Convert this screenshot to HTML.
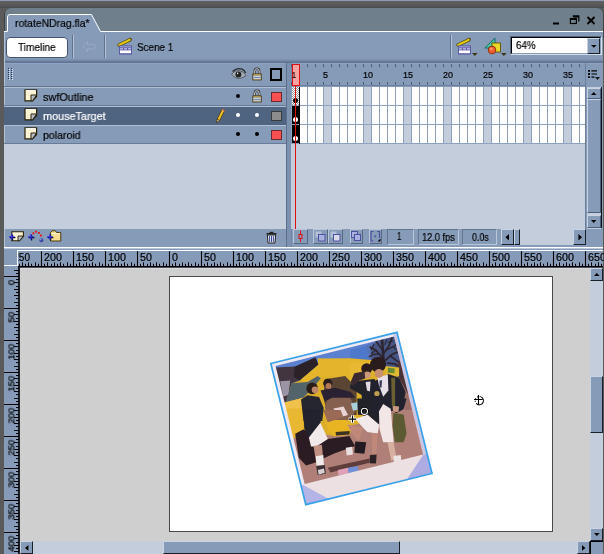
<!DOCTYPE html>
<html><head><meta charset="utf-8"><title>rotateNDrag.fla</title>
<style>
*{box-sizing:border-box;margin:0;padding:0}
html,body{width:604px;height:554px;overflow:hidden;background:#5a5a5a}
body{position:relative;font-family:"Liberation Sans","DejaVu Sans",sans-serif;font-size:11px;color:#000}
.a{position:absolute}
.t{position:absolute;white-space:nowrap;line-height:1;transform-origin:0 0;-webkit-text-stroke:.2px currentColor;will-change:transform}
.btn{position:absolute;background:#869bb8;border:1px solid;border-color:#c9d3e2 #1a1f28 #1a1f28 #c9d3e2}
svg{position:absolute;overflow:visible}
</style></head><body>

<div class="a" style="left:0;top:0;width:604px;height:1px;background:#8d9cb4"></div>
<div class="a" style="left:0;top:1px;width:604px;height:7px;background:linear-gradient(#606060,#585858 60%,#4c4c4c)"></div>
<div class="a" style="left:3.5px;top:7.5px;width:600px;height:30px;background:#3c4044;border-radius:7px 7px 0 0"></div>
<div class="a" style="left:4.5px;top:8.3px;width:598.5px;height:30px;background:#6f808c;border-radius:6px 6px 0 0"></div>
<div class="a" style="left:4px;top:32px;width:599px;height:215px;background:#869bb8"></div>
<svg style="left:0;top:0" width="604" height="40">
<path d="M7.5 32 V17 Q7.5 14.5 10 14.5 H91.5 L100.5 31.5 H603 V33 H7.5Z" fill="#869bb8"/>
<path d="M4 31.5 H7.5 V17 Q7.5 14.5 10 14.5 H91.5 L100.5 31.5 H603" fill="none" stroke="#fff" stroke-width="1"/>
</svg>
<div class="t" style="left:15px;top:18px;transform:scaleX(.945)">rotateNDrag.fla*</div>
<svg style="left:0;top:0" width="604" height="32">
<rect x="553" y="22.5" width="6" height="2" fill="#000"/>
<path d="M572.8 15.8 H578.8 V21.4 M572.8 16.8 H578.8" fill="none" stroke="#000" stroke-width="1.2"/>
<rect x="570.4" y="18.5" width="6" height="5" fill="none" stroke="#000" stroke-width="1.2"/>
<path d="M570.4 19.4 H576.4" stroke="#000" stroke-width="1.2"/>
<path d="M587.5 17 L594.5 24 M594.5 17 L587.5 24" stroke="#000" stroke-width="2"/>
</svg>
<div class="a" style="left:6px;top:37px;width:62px;height:21px;background:#fff;border:1px solid #465670;border-radius:4px"></div>
<div class="t" style="left:18.2px;top:42px;transform:scaleX(.915)">Timeline</div>
<div class="a" style="left:72px;top:35px;width:1px;height:24px;background:#60738f"></div>
<div class="a" style="left:73px;top:35px;width:1px;height:24px;background:#b4c1d5"></div>
<div class="a" style="left:104px;top:35px;width:1px;height:24px;background:#60738f"></div>
<div class="a" style="left:105px;top:35px;width:1px;height:24px;background:#b4c1d5"></div>
<div class="a" style="left:450px;top:35px;width:1px;height:24px;background:#60738f"></div>
<div class="a" style="left:451px;top:35px;width:1px;height:24px;background:#b4c1d5"></div>
<div class="t" style="left:137px;top:42px;transform:scaleX(.9)">Scene 1</div>
<svg style="left:118px;top:37.8px" width="16" height="18">
<path d="M1 7 L12.2 1.6" stroke="#4a4010" stroke-width="3.4" stroke-linecap="round"/>
<path d="M1.2 6.9 L12 1.7" stroke="#e0c814" stroke-width="2.2" stroke-linecap="round" stroke-dasharray="1.7 .8"/>
<rect x="1" y="7.4" width="13" height="9.2" fill="#5c5ca6"/>
<rect x="2" y="8.4" width="11" height=".9" fill="#b4b4e0"/>
<path d="M2 10.9 H5 M6 10.9 H9 M10 10.9 H13" stroke="#c8c8ee" stroke-width="1.1"/>
<rect x="2" y="12.4" width="11" height="2.8" fill="#fff"/>
</svg>
<svg style="left:457px;top:37.8px" width="16" height="18">
<path d="M1 7 L12.2 1.6" stroke="#4a4010" stroke-width="3.4" stroke-linecap="round"/>
<path d="M1.2 6.9 L12 1.7" stroke="#e0c814" stroke-width="2.2" stroke-linecap="round" stroke-dasharray="1.7 .8"/>
<rect x="1" y="7.4" width="13" height="9.2" fill="#5c5ca6"/>
<rect x="2" y="8.4" width="11" height=".9" fill="#b4b4e0"/>
<path d="M2 10.9 H5 M6 10.9 H9 M10 10.9 H13" stroke="#c8c8ee" stroke-width="1.1"/>
<rect x="2" y="12.4" width="11" height="2.8" fill="#fff"/>
</svg>
<svg style="left:82px;top:41px" width="14" height="13">
<path d="M0.5 5.5 L5.5 0.5 V3.5 H13 V8 H8 V7.5 H5.5 V10.5 Z" fill="none" stroke="#a9b4cd" stroke-width="1" stroke-dasharray="1 1"/>
</svg>
<svg style="left:472px;top:53px" width="6" height="4"><path d="M0 0 H5.6 L2.8 3 Z" fill="#3c3418"/></svg>
<svg style="left:501px;top:53px" width="6" height="4"><path d="M0 0 H5.6 L2.8 3 Z" fill="#3c3418"/></svg>
<svg style="left:484px;top:37px" width="18" height="18">
<path d="M0.8 11 L11 1 V11 Z" fill="#40c8a0" stroke="#1a6a70" stroke-width="1"/>
<rect x="8" y="6" width="8.5" height="9" fill="#e8d828" stroke="#6a5a10" stroke-width="1"/>
<circle cx="8" cy="13" r="3.8" fill="#f06030" stroke="#903010" stroke-width="1"/>
<circle cx="7.3" cy="11.8" r="1.3" fill="#f8a070"/>
</svg>
<div class="a" style="left:510px;top:36px;width:92px;height:19px;background:#fff;border:1px solid;border-color:#55657d #d5dde9 #d5dde9 #55657d"></div>
<div class="a" style="left:511px;top:37px;width:90px;height:17px;border:1px solid;border-color:#000 #869bb8 #869bb8 #000"></div>
<div class="btn" style="left:587px;top:38px;width:13px;height:15.5px"></div>
<svg style="left:590.8px;top:44.6px" width="6" height="4"><path d="M0 0 H5.6 L2.8 2.8 Z" fill="#000"/></svg>
<div class="t" style="left:515.5px;top:41.3px;font-size:10.3px;transform:scaleX(.95)">64%</div>
<div class="a" style="left:4px;top:58px;width:599px;height:5px;background:linear-gradient(#869bb8,#7f95b2 30%,#6c82a0 60%,#5a708e)"></div>
<div class="a" style="left:4px;top:63px;width:599px;height:1px;background:#90a4c0"></div>
<div class="a" style="left:4px;top:32px;width:1px;height:215px;background:#b4c1d5"></div>
<svg style="left:8px;top:68px" width="6" height="14"><rect x="0" y="0" width="1" height="1" fill="#2c3a52"/><rect x="1" y="1" width="1" height="1" fill="#d4eaff"/><rect x="3" y="0" width="1" height="1" fill="#2c3a52"/><rect x="4" y="1" width="1" height="1" fill="#d4eaff"/><rect x="0" y="2" width="1" height="1" fill="#2c3a52"/><rect x="1" y="3" width="1" height="1" fill="#d4eaff"/><rect x="3" y="2" width="1" height="1" fill="#2c3a52"/><rect x="4" y="3" width="1" height="1" fill="#d4eaff"/><rect x="0" y="4" width="1" height="1" fill="#2c3a52"/><rect x="1" y="5" width="1" height="1" fill="#d4eaff"/><rect x="3" y="4" width="1" height="1" fill="#2c3a52"/><rect x="4" y="5" width="1" height="1" fill="#d4eaff"/><rect x="0" y="6" width="1" height="1" fill="#2c3a52"/><rect x="1" y="7" width="1" height="1" fill="#d4eaff"/><rect x="3" y="6" width="1" height="1" fill="#2c3a52"/><rect x="4" y="7" width="1" height="1" fill="#d4eaff"/><rect x="0" y="8" width="1" height="1" fill="#2c3a52"/><rect x="1" y="9" width="1" height="1" fill="#d4eaff"/><rect x="3" y="8" width="1" height="1" fill="#2c3a52"/><rect x="4" y="9" width="1" height="1" fill="#d4eaff"/><rect x="0" y="10" width="1" height="1" fill="#2c3a52"/><rect x="1" y="11" width="1" height="1" fill="#d4eaff"/><rect x="3" y="10" width="1" height="1" fill="#2c3a52"/><rect x="4" y="11" width="1" height="1" fill="#d4eaff"/></svg>
<div class="a" style="left:4px;top:86px;width:282px;height:1px;background:#5f7490"></div>
<div class="a" style="left:4px;top:87px;width:282px;height:1px;background:#b0bfd4"></div>
<div class="a" style="left:4px;top:105px;width:282px;height:1px;background:#677c99"></div>
<div class="t" style="left:42.7px;top:92px;color:#000;transform:scaleX(0.985)">swfOutline</div>
<svg style="left:24px;top:89px" width="14" height="13">
<path d="M1 0.8 H12.6 V7.5 L8.5 11.8 H1 Z" fill="#fbf4d4" stroke="#2a2208" stroke-width="1.2"/>
<path d="M7 6 H12.6 L8.5 11.8 H7 Z" fill="#b8bcc8" stroke="#2a2208" stroke-width="1"/>
<path d="M1.8 1.6 H11.8" stroke="#fff" stroke-width="1"/>
</svg>
<div class="a" style="left:236px;top:94px;width:4px;height:4px;border-radius:2px;background:#000"></div>
<div class="a" style="left:270.5px;top:91.5px;width:11.5px;height:10.5px;background:#f85050;border:1px solid #6a2a30"></div>
<div class="a" style="left:4px;top:107px;width:282px;height:18px;background:#4f6480"></div>
<div class="a" style="left:4px;top:106px;width:282px;height:1px;background:#b0bfd4"></div>
<div class="t" style="left:42.7px;top:111px;color:#fff;transform:scaleX(0.985)">mouseTarget</div>
<svg style="left:24px;top:108px" width="14" height="13">
<path d="M1 0.8 H12.6 V7.5 L8.5 11.8 H1 Z" fill="#fbf4d4" stroke="#2a2208" stroke-width="1.2"/>
<path d="M7 6 H12.6 L8.5 11.8 H7 Z" fill="#b8bcc8" stroke="#2a2208" stroke-width="1"/>
<path d="M1.8 1.6 H11.8" stroke="#fff" stroke-width="1"/>
</svg>
<div class="a" style="left:236px;top:113px;width:4px;height:4px;border-radius:2px;background:#fff"></div>
<div class="a" style="left:255px;top:113px;width:4px;height:4px;border-radius:2px;background:#fff"></div>
<div class="a" style="left:270.5px;top:110.5px;width:11.5px;height:10.5px;background:#8c8c8c;border:1px solid #3a3a3a"></div>
<div class="a" style="left:4px;top:125px;width:282px;height:1px;background:#b0bfd4"></div>
<div class="a" style="left:4px;top:143px;width:282px;height:1px;background:#677c99"></div>
<div class="t" style="left:42.7px;top:130px;color:#000;transform:scaleX(0.96)">polaroid</div>
<svg style="left:24px;top:127px" width="14" height="13">
<path d="M1 0.8 H12.6 V7.5 L8.5 11.8 H1 Z" fill="#fbf4d4" stroke="#2a2208" stroke-width="1.2"/>
<path d="M7 6 H12.6 L8.5 11.8 H7 Z" fill="#b8bcc8" stroke="#2a2208" stroke-width="1"/>
<path d="M1.8 1.6 H11.8" stroke="#fff" stroke-width="1"/>
</svg>
<div class="a" style="left:236px;top:132px;width:4px;height:4px;border-radius:2px;background:#000"></div>
<div class="a" style="left:255px;top:132px;width:4px;height:4px;border-radius:2px;background:#000"></div>
<div class="a" style="left:270.5px;top:129.5px;width:11.5px;height:10.5px;background:#f85050;border:1px solid #6a2a30"></div>
<div class="a" style="left:4px;top:144px;width:282px;height:85px;background:#c3cddc"></div>
<svg style="left:252px;top:67px" width="11" height="14" viewBox="0 -1 11.6 15.4">
<path d="M2.8 7 V3.4 Q2.8 0.9 5.2 0.9 Q7.6 0.9 7.6 3.4 V7" fill="none" stroke="#26262a" stroke-width="2.6"/>
<path d="M2.8 7 V3.4 Q2.8 0.9 5.2 0.9 Q7.6 0.9 7.6 3.4 V7" fill="none" stroke="#e4e4ea" stroke-width="1.1"/>
<rect x="0.7" y="6.6" width="9.2" height="6.6" fill="#ecd070" stroke="#3a3010" stroke-width="1"/>
<rect x="1.2" y="8.4" width="8.2" height="1" fill="#4a70c8"/>
<rect x="1.2" y="9.4" width="8.2" height=".8" fill="#f4f4f4"/>
<rect x="1.2" y="10.3" width="8.2" height="1" fill="#4a70c8"/>
<rect x="1.2" y="11.4" width="8.2" height="1" fill="#c8d4ec"/>
</svg>
<svg style="left:252px;top:89px" width="11" height="14" viewBox="0 -1 11.6 15.4">
<path d="M2.8 7 V3.4 Q2.8 0.9 5.2 0.9 Q7.6 0.9 7.6 3.4 V7" fill="none" stroke="#26262a" stroke-width="2.6"/>
<path d="M2.8 7 V3.4 Q2.8 0.9 5.2 0.9 Q7.6 0.9 7.6 3.4 V7" fill="none" stroke="#e4e4ea" stroke-width="1.1"/>
<rect x="0.7" y="6.6" width="9.2" height="6.6" fill="#ecd070" stroke="#3a3010" stroke-width="1"/>
<rect x="1.2" y="8.4" width="8.2" height="1" fill="#4a70c8"/>
<rect x="1.2" y="9.4" width="8.2" height=".8" fill="#f4f4f4"/>
<rect x="1.2" y="10.3" width="8.2" height="1" fill="#4a70c8"/>
<rect x="1.2" y="11.4" width="8.2" height="1" fill="#c8d4ec"/>
</svg>
<svg style="left:231px;top:68px" width="16" height="12">
<path d="M0.5 6.2 Q4 2.2 8 2.6 Q12.5 3 15 7.5 Q11 10.8 7 10.4 Q3 10 0.5 6.2Z" fill="#a4aebb" stroke="#4a4a4a" stroke-width=".8"/>
<path d="M1.5 3.5 Q6 -0.5 11 1.2 Q13.8 2.4 14.6 5" fill="none" stroke="#2a2a2a" stroke-width="1.3"/>
<circle cx="7.4" cy="6.4" r="3" fill="#222"/>
<circle cx="6.6" cy="5.4" r=".8" fill="#ddd"/>
</svg>
<div class="a" style="left:270px;top:68px;width:12px;height:12.5px;border:2px solid #000"></div>
<svg style="left:215px;top:108px" width="11" height="16">
<path d="M7.2 1 L9.8 2.2 L4.6 12.6 L2 11.4 Z" fill="#f0c030" stroke="#4a3808" stroke-width=".8"/>
<path d="M2 11.4 L4.6 12.6 L1.6 15 Z" fill="#f0d8b0" stroke="#4a3808" stroke-width=".6"/>
<path d="M1.6 15 L2.6 13.4 L1.9 13.1Z" fill="#000"/>
<path d="M7.2 1 L9.8 2.2 L9.2 3.4 L6.6 2.2Z" fill="#e08080"/>
</svg>
<div class="a" style="left:286px;top:63px;width:5px;height:184px;background:#7b91af"></div>
<div class="a" style="left:286px;top:63px;width:1px;height:184px;background:#5c708c"></div>
<div class="a" style="left:291px;top:63px;width:1px;height:184px;background:#7087a6"></div>
<svg style="left:291px;top:63px" width="295" height="24"><path d="M0.5 1 V4.2 M0.5 19 V22.5 M8.5 1 V4.2 M8.5 19 V22.5 M16.5 1 V4.2 M16.5 19 V22.5 M24.5 1 V4.2 M24.5 19 V22.5 M32.5 1 V4.2 M32.5 19 V22.5 M40.5 1 V4.2 M40.5 19 V22.5 M48.5 1 V4.2 M48.5 19 V22.5 M56.5 1 V4.2 M56.5 19 V22.5 M64.5 1 V4.2 M64.5 19 V22.5 M72.5 1 V4.2 M72.5 19 V22.5 M80.5 1 V4.2 M80.5 19 V22.5 M88.5 1 V4.2 M88.5 19 V22.5 M96.5 1 V4.2 M96.5 19 V22.5 M104.5 1 V4.2 M104.5 19 V22.5 M112.5 1 V4.2 M112.5 19 V22.5 M120.5 1 V4.2 M120.5 19 V22.5 M128.5 1 V4.2 M128.5 19 V22.5 M136.5 1 V4.2 M136.5 19 V22.5 M144.5 1 V4.2 M144.5 19 V22.5 M152.5 1 V4.2 M152.5 19 V22.5 M160.5 1 V4.2 M160.5 19 V22.5 M168.5 1 V4.2 M168.5 19 V22.5 M176.5 1 V4.2 M176.5 19 V22.5 M184.5 1 V4.2 M184.5 19 V22.5 M192.5 1 V4.2 M192.5 19 V22.5 M200.5 1 V4.2 M200.5 19 V22.5 M208.5 1 V4.2 M208.5 19 V22.5 M216.5 1 V4.2 M216.5 19 V22.5 M224.5 1 V4.2 M224.5 19 V22.5 M232.5 1 V4.2 M232.5 19 V22.5 M240.5 1 V4.2 M240.5 19 V22.5 M248.5 1 V4.2 M248.5 19 V22.5 M256.5 1 V4.2 M256.5 19 V22.5 M264.5 1 V4.2 M264.5 19 V22.5 M272.5 1 V4.2 M272.5 19 V22.5 M280.5 1 V4.2 M280.5 19 V22.5 M288.5 1 V4.2 M288.5 19 V22.5 " stroke="#4c6080" stroke-width="1"/><path d="M0 22.5 H295" stroke="#6c809d"/></svg>
<div class="t" style="left:323.2px;top:70.5px;font-size:9px">5</div>
<div class="t" style="left:363.2px;top:70.5px;font-size:9px">10</div>
<div class="t" style="left:403.2px;top:70.5px;font-size:9px">15</div>
<div class="t" style="left:443.2px;top:70.5px;font-size:9px">20</div>
<div class="t" style="left:483.2px;top:70.5px;font-size:9px">25</div>
<div class="t" style="left:523.2px;top:70.5px;font-size:9px">30</div>
<div class="t" style="left:563.2px;top:70.5px;font-size:9px">35</div>
<div class="a" style="left:291px;top:87px;width:295px;height:57px;background:#fff"></div>
<div class="a" style="left:324px;top:87px;width:7px;height:57px;background:#c3cddc"></div>
<div class="a" style="left:364px;top:87px;width:7px;height:57px;background:#c3cddc"></div>
<div class="a" style="left:404px;top:87px;width:7px;height:57px;background:#c3cddc"></div>
<div class="a" style="left:444px;top:87px;width:7px;height:57px;background:#c3cddc"></div>
<div class="a" style="left:484px;top:87px;width:7px;height:57px;background:#c3cddc"></div>
<div class="a" style="left:524px;top:87px;width:7px;height:57px;background:#c3cddc"></div>
<div class="a" style="left:564px;top:87px;width:7px;height:57px;background:#c3cddc"></div>
<div class="a" style="left:291px;top:87px;width:295px;height:57px;background:repeating-linear-gradient(90deg,#8da1bc 0,#8da1bc 1px,transparent 1px,transparent 8px)"></div>
<div class="a" style="left:291px;top:105px;width:295px;height:1px;background:#8da1bc"></div>
<div class="a" style="left:291px;top:124px;width:295px;height:1px;background:#8da1bc"></div>
<div class="a" style="left:291px;top:143px;width:295px;height:1px;background:#8da1bc"></div>
<div class="a" style="left:291px;top:144px;width:295px;height:85px;background:#c3cddc"></div>
<div class="a" style="left:585px;top:63px;width:1px;height:166px;background:#6c809d"></div>
<div class="a" style="left:292px;top:87px;width:7px;height:18px;background:#e8e8e8;background-image:repeating-conic-gradient(#999 0 25%,#fff 0 50%);background-size:2px 2px"></div>
<div class="a" style="left:299px;top:87px;width:1px;height:57px;background:#000"></div>
<div class="a" style="left:292px;top:106px;width:7px;height:18px;background:#000"></div>
<div class="a" style="left:292px;top:125px;width:7px;height:18px;background:#000"></div>
<div class="a" style="left:293px;top:98px;width:5px;height:5px;border-radius:3px;background:#000"></div>
<div class="a" style="left:293px;top:117px;width:5px;height:5px;border-radius:3px;background:#fff"></div>
<div class="a" style="left:293px;top:136px;width:5px;height:5px;border-radius:3px;background:#fff"></div>
<div class="a" style="left:291.5px;top:64px;width:8px;height:22px;background:#f7a3a3;border:1px solid #e01010"></div>
<div class="t" style="left:291.5px;top:71px;font-size:9px;transform:scaleX(.8)">1</div>
<div class="a" style="left:295px;top:86px;width:1px;height:143px;background:#e01010"></div>
<svg style="left:588px;top:70px" width="13" height="11">
<path d="M0 0.9 H2 M0 4 H2 M0 7.1 H2" stroke="#000" stroke-width="1.8"/>
<path d="M3.4 0.9 H9 M3.4 4 H9 M3.4 7.1 H6.4" stroke="#000" stroke-width="1.1"/>
<path d="M7 7 H12 L9.5 10Z" fill="#1a1a1a"/>
</svg>
<div class="a" style="left:587px;top:87px;width:14px;height:142px;background:#c3cddc"></div>
<div class="btn" style="left:587px;top:87.5px;width:14px;height:11px;border-color:#c9d3e2 #4a5c78 #4a5c78 #c9d3e2"></div>
<svg style="left:590.8px;top:91.8px" width="6" height="4"><path d="M0 3 H5.4 L2.7 0 Z" fill="#000"/></svg>
<div class="btn" style="left:587px;top:99px;width:14px;height:114px;border-color:#c9d3e2 #4a5c78 #4a5c78 #c9d3e2"></div>
<div class="btn" style="left:587px;top:215px;width:14px;height:12.5px;border-color:#c9d3e2 #4a5c78 #4a5c78 #c9d3e2"></div>
<svg style="left:590.8px;top:220px" width="6" height="4"><path d="M0 0 H5.4 L2.7 3 Z" fill="#000"/></svg>
<div class="a" style="left:601px;top:87px;width:1px;height:141px;background:#101418"></div><svg style="left:11px;top:231px" width="14" height="11">
<path d="M0.8 0.8 H12.4 V5.5 L8.5 9.8 H0.8 Z" fill="#fbf4d4" stroke="#2a2208" stroke-width="1.1"/>
<path d="M7 5 H12.4 L8.5 9.8 H7 Z" fill="#b8bcc8" stroke="#2a2208" stroke-width=".9"/>
</svg>
<svg style="left:8.5px;top:234px" width="7" height="7"><path d="M0.8 3.6 H6.4 M3.6 0.8 V6.4" stroke="#000" stroke-width="1.1"/><path d="M0 2.9 H5.8 M2.9 0 V5.8" stroke="#3030e8" stroke-width="1.2"/></svg>
<svg style="left:27.5px;top:234px" width="7" height="7"><path d="M0.8 3.6 H6.4 M3.6 0.8 V6.4" stroke="#000" stroke-width="1.1"/><path d="M0 2.9 H5.8 M2.9 0 V5.8" stroke="#3030e8" stroke-width="1.2"/></svg>
<svg style="left:32px;top:230px" width="12" height="13">
<rect x="0.5" y="2.4" width="1.8" height="1.8" fill="#e81010"/><rect x="3.2" y="0.8" width="1.8" height="1.8" fill="#e81010"/>
<rect x="6" y="2" width="1.8" height="1.8" fill="#e81010"/><rect x="8" y="4.6" width="1.8" height="1.8" fill="#e81010"/>
<circle cx="9.4" cy="10.2" r="2" fill="#3848a8"/><circle cx="8.8" cy="9.6" r=".8" fill="#90a0e0"/>
</svg>
<svg style="left:50px;top:230px" width="12" height="12">
<path d="M0.6 2.6 L2 0.8 H5.4 L6.6 2.6 H10.8 V11 H0.6 Z" fill="#f6dc90" stroke="#4a3808" stroke-width="1"/>
<path d="M1.4 3.6 H10" stroke="#fff6d0" stroke-width="1"/>
</svg>
<svg style="left:46.8px;top:234px" width="7" height="7"><path d="M0.8 3.6 H6.4 M3.6 0.8 V6.4" stroke="#000" stroke-width="1.1"/><path d="M0 2.9 H5.8 M2.9 0 V5.8" stroke="#3030e8" stroke-width="1.2"/></svg>
<svg style="left:266px;top:231px" width="12" height="13">
<path d="M3.6 1.4 H7.4" stroke="#222" stroke-width="1.2"/>
<path d="M0.6 2.8 H10.4" stroke="#222" stroke-width="1.6"/>
<path d="M1.4 4 H9.6 L9 12 H2 Z" fill="#e8ecf4" stroke="#222" stroke-width="1"/>
<path d="M3.6 5 V11 M5.5 5 V11 M7.4 5 V11" stroke="#3a4a9a" stroke-width="1"/>
</svg>
<div class="a" style="left:293px;top:229px;width:14.5px;height:15px;background:#869bb8;border:1px solid;border-color:#b9c6d9 #556882 #556882 #b9c6d9"></div>
<svg style="left:293px;top:229px" width="15" height="15"><path d="M7.5 1.5 V13" stroke="#e01010" stroke-width="1"/><rect x="6" y="5.5" width="3" height="4" fill="#869bb8" stroke="#e01010" stroke-width="1"/></svg>
<div class="a" style="left:313px;top:229px;width:14.5px;height:15px;background:#869bb8;border:1px solid;border-color:#b9c6d9 #556882 #556882 #b9c6d9"></div>
<div class="a" style="left:328px;top:229px;width:14.5px;height:15px;background:#869bb8;border:1px solid;border-color:#b9c6d9 #556882 #556882 #b9c6d9"></div>
<div class="a" style="left:349.5px;top:229px;width:13px;height:15px;background:#869bb8;border:1px solid;border-color:#b9c6d9 #556882 #556882 #b9c6d9"></div>
<div class="a" style="left:368.5px;top:229px;width:13.5px;height:15px;background:#869bb8;border:1px solid;border-color:#b9c6d9 #556882 #556882 #b9c6d9"></div>
<svg style="left:313px;top:229px" width="15" height="15"><rect x="2.5" y="2.5" width="6" height="6" fill="#b4c0d8"/><rect x="5.5" y="5.5" width="6.5" height="6.5" fill="#a8b0e0" stroke="#5050a0" stroke-width="1"/></svg>
<svg style="left:328px;top:229px" width="15" height="15"><rect x="2.5" y="2.5" width="6" height="6" fill="#b4c0d8"/><rect x="5.5" y="5.5" width="6.5" height="6.5" fill="#d8dce8" stroke="#5050a0" stroke-width="1"/></svg>
<svg style="left:349px;top:229px" width="15" height="15"><rect x="2.5" y="2.5" width="6" height="6" fill="#a8b0e0" stroke="#5050a0" stroke-width="1"/><rect x="5.5" y="5.5" width="6" height="6" fill="#a8b0e0" stroke="#5050a0" stroke-width="1"/></svg>
<svg style="left:368px;top:229px" width="15" height="15"><path d="M5.5 2.5 H3 V12 H5.5 M9 2.5 H11.5 V9" fill="none" stroke="#5050a0" stroke-width="1.2"/><rect x="6.4" y="6.4" width="1.8" height="1.8" fill="#5050a0"/><path d="M12.5 9.5 V12.5 H9.5Z" fill="#000"/></svg>
<div class="a" style="left:387px;top:229px;width:26.5px;height:15.5px;background:#869bb8;border:1px solid;border-color:#62758f #b9c6d9 #b9c6d9 #62758f"></div>
<div class="a" style="left:417.5px;top:229px;width:41px;height:15.5px;background:#869bb8;border:1px solid;border-color:#62758f #b9c6d9 #b9c6d9 #62758f"></div>
<div class="a" style="left:462px;top:229px;width:35px;height:15.5px;background:#869bb8;border:1px solid;border-color:#62758f #b9c6d9 #b9c6d9 #62758f"></div>
<div class="t" style="left:396.8px;top:232px;font-size:10px;transform:scaleX(.8)">1</div>
<div class="t" style="left:422px;top:232px;font-size:10.5px;transform:scaleX(.88)">12.0 fps</div>
<div class="t" style="left:471.5px;top:232px;font-size:10.5px;transform:scaleX(.85)">0.0s</div>
<div class="a" style="left:501px;top:229px;width:85px;height:15.5px;background:#c3cddc"></div>
<div class="btn" style="left:501px;top:229px;width:13px;height:15.5px"></div>
<svg style="left:505px;top:233.5px" width="5" height="7"><path d="M4 0 V6.4 L0.4 3.2Z" fill="#000"/></svg>
<div class="btn" style="left:514px;top:229px;width:6px;height:15.5px"></div>
<div class="btn" style="left:573px;top:229px;width:13px;height:15.5px"></div>
<svg style="left:577.5px;top:233.5px" width="5" height="7"><path d="M0.4 0 V6.4 L4 3.2Z" fill="#000"/></svg>
<div class="a" style="left:4px;top:247px;width:599px;height:1px;background:#fff"></div>
<div class="a" style="left:4px;top:248px;width:599px;height:1px;background:#b9c5d8"></div>
<div class="a" style="left:4px;top:249px;width:599px;height:305px;background:#869bb8"></div>
<div class="a" style="left:20px;top:268px;width:570px;height:273px;background:#cfcfcf"></div>
<div class="a" style="left:20px;top:268px;width:570px;height:1px;background:#dcdcdc"></div>
<div class="a" style="left:169px;top:276px;width:384px;height:256px;background:#fff;border:1px solid #4a4a4a"></div>
<svg style="left:0;top:250px" width="604" height="18"><path d="M41.50 1.3 V17 M73.50 1.3 V17 M105.50 1.3 V17 M137.50 1.3 V17 M169.50 1.3 V17 M201.50 1.3 V17 M233.50 1.3 V17 M265.50 1.3 V17 M297.50 1.3 V17 M329.50 1.3 V17 M361.50 1.3 V17 M393.50 1.3 V17 M425.50 1.3 V17 M457.50 1.3 V17 M489.50 1.3 V17 M521.50 1.3 V17 M553.50 1.3 V17 M585.50 1.3 V17 " stroke="#000" stroke-width="1.1"/><path d="M22.50 12.3 V17 M28.50 12.3 V17 M35.50 12.3 V17 M47.50 12.3 V17 M54.50 12.3 V17 M60.50 12.3 V17 M67.50 12.3 V17 M79.50 12.3 V17 M86.50 12.3 V17 M92.50 12.3 V17 M99.50 12.3 V17 M111.50 12.3 V17 M118.50 12.3 V17 M124.50 12.3 V17 M131.50 12.3 V17 M143.50 12.3 V17 M150.50 12.3 V17 M156.50 12.3 V17 M163.50 12.3 V17 M175.50 12.3 V17 M182.50 12.3 V17 M188.50 12.3 V17 M195.50 12.3 V17 M207.50 12.3 V17 M214.50 12.3 V17 M220.50 12.3 V17 M227.50 12.3 V17 M239.50 12.3 V17 M246.50 12.3 V17 M252.50 12.3 V17 M259.50 12.3 V17 M271.50 12.3 V17 M278.50 12.3 V17 M284.50 12.3 V17 M291.50 12.3 V17 M303.50 12.3 V17 M310.50 12.3 V17 M316.50 12.3 V17 M323.50 12.3 V17 M335.50 12.3 V17 M342.50 12.3 V17 M348.50 12.3 V17 M355.50 12.3 V17 M367.50 12.3 V17 M374.50 12.3 V17 M380.50 12.3 V17 M387.50 12.3 V17 M399.50 12.3 V17 M406.50 12.3 V17 M412.50 12.3 V17 M419.50 12.3 V17 M431.50 12.3 V17 M438.50 12.3 V17 M444.50 12.3 V17 M451.50 12.3 V17 M463.50 12.3 V17 M470.50 12.3 V17 M476.50 12.3 V17 M483.50 12.3 V17 M495.50 12.3 V17 M502.50 12.3 V17 M508.50 12.3 V17 M515.50 12.3 V17 M527.50 12.3 V17 M534.50 12.3 V17 M540.50 12.3 V17 M547.50 12.3 V17 M559.50 12.3 V17 M566.50 12.3 V17 M572.50 12.3 V17 M579.50 12.3 V17 M591.50 12.3 V17 M598.50 12.3 V17 M19.50 13.8 V17 M25.50 13.8 V17 M31.50 13.8 V17 M38.50 13.8 V17 M44.50 13.8 V17 M51.50 13.8 V17 M57.50 13.8 V17 M63.50 13.8 V17 M70.50 13.8 V17 M76.50 13.8 V17 M83.50 13.8 V17 M89.50 13.8 V17 M95.50 13.8 V17 M102.50 13.8 V17 M108.50 13.8 V17 M115.50 13.8 V17 M121.50 13.8 V17 M127.50 13.8 V17 M134.50 13.8 V17 M140.50 13.8 V17 M147.50 13.8 V17 M153.50 13.8 V17 M159.50 13.8 V17 M166.50 13.8 V17 M172.50 13.8 V17 M179.50 13.8 V17 M185.50 13.8 V17 M191.50 13.8 V17 M198.50 13.8 V17 M204.50 13.8 V17 M211.50 13.8 V17 M217.50 13.8 V17 M223.50 13.8 V17 M230.50 13.8 V17 M236.50 13.8 V17 M243.50 13.8 V17 M249.50 13.8 V17 M255.50 13.8 V17 M262.50 13.8 V17 M268.50 13.8 V17 M275.50 13.8 V17 M281.50 13.8 V17 M287.50 13.8 V17 M294.50 13.8 V17 M300.50 13.8 V17 M307.50 13.8 V17 M313.50 13.8 V17 M319.50 13.8 V17 M326.50 13.8 V17 M332.50 13.8 V17 M339.50 13.8 V17 M345.50 13.8 V17 M351.50 13.8 V17 M358.50 13.8 V17 M364.50 13.8 V17 M371.50 13.8 V17 M377.50 13.8 V17 M383.50 13.8 V17 M390.50 13.8 V17 M396.50 13.8 V17 M403.50 13.8 V17 M409.50 13.8 V17 M415.50 13.8 V17 M422.50 13.8 V17 M428.50 13.8 V17 M435.50 13.8 V17 M441.50 13.8 V17 M447.50 13.8 V17 M454.50 13.8 V17 M460.50 13.8 V17 M467.50 13.8 V17 M473.50 13.8 V17 M479.50 13.8 V17 M486.50 13.8 V17 M492.50 13.8 V17 M499.50 13.8 V17 M505.50 13.8 V17 M511.50 13.8 V17 M518.50 13.8 V17 M524.50 13.8 V17 M531.50 13.8 V17 M537.50 13.8 V17 M543.50 13.8 V17 M550.50 13.8 V17 M556.50 13.8 V17 M563.50 13.8 V17 M569.50 13.8 V17 M575.50 13.8 V17 M582.50 13.8 V17 M588.50 13.8 V17 M595.50 13.8 V17 M601.50 13.8 V17 " stroke="#000" stroke-width="1"/><path d="M18 16.7 H603" stroke="#000" stroke-width="1.5"/></svg>
<div class="t" style="left:18px;top:252.7px;font-size:10px;width:12px;overflow:hidden;direction:rtl">250</div>
<div class="t" style="left:43.5px;top:252.7px;font-size:10px;transform:scaleX(1.07)">200</div>
<div class="t" style="left:75.5px;top:252.7px;font-size:10px;transform:scaleX(1.07)">150</div>
<div class="t" style="left:107.5px;top:252.7px;font-size:10px;transform:scaleX(1.07)">100</div>
<div class="t" style="left:139.5px;top:252.7px;font-size:10px;transform:scaleX(1.07)">50</div>
<div class="t" style="left:171.5px;top:252.7px;font-size:10px;transform:scaleX(1.07)">0</div>
<div class="t" style="left:203.5px;top:252.7px;font-size:10px;transform:scaleX(1.07)">50</div>
<div class="t" style="left:235.5px;top:252.7px;font-size:10px;transform:scaleX(1.07)">100</div>
<div class="t" style="left:267.5px;top:252.7px;font-size:10px;transform:scaleX(1.07)">150</div>
<div class="t" style="left:299.5px;top:252.7px;font-size:10px;transform:scaleX(1.07)">200</div>
<div class="t" style="left:331.5px;top:252.7px;font-size:10px;transform:scaleX(1.07)">250</div>
<div class="t" style="left:363.5px;top:252.7px;font-size:10px;transform:scaleX(1.07)">300</div>
<div class="t" style="left:395.5px;top:252.7px;font-size:10px;transform:scaleX(1.07)">350</div>
<div class="t" style="left:427.5px;top:252.7px;font-size:10px;transform:scaleX(1.07)">400</div>
<div class="t" style="left:459.5px;top:252.7px;font-size:10px;transform:scaleX(1.07)">450</div>
<div class="t" style="left:491.5px;top:252.7px;font-size:10px;transform:scaleX(1.07)">500</div>
<div class="t" style="left:523.5px;top:252.7px;font-size:10px;transform:scaleX(1.07)">550</div>
<div class="t" style="left:555.5px;top:252.7px;font-size:10px;transform:scaleX(1.07)">600</div>
<div class="t" style="left:587.5px;top:252.7px;font-size:10px;transform:scaleX(1.07)">650</div>
<div class="a" style="left:4px;top:250px;width:14px;height:16px;background:#869bb8;border-right:1px solid #fff;border-bottom:1px solid #fff"></div>
<div class="a" style="left:17px;top:250px;width:586px;height:1px;background:#fff"></div>
<svg style="left:0;top:0" width="20" height="554"><path d="M4 276.50 H19 M4 308.50 H19 M4 340.50 H19 M4 372.50 H19 M4 404.50 H19 M4 436.50 H19 M4 468.50 H19 M4 500.50 H19 M4 532.50 H19 " stroke="#000" stroke-width="1.2"/><path d="M14 270.50 H19 M14 282.50 H19 M14 289.50 H19 M14 295.50 H19 M14 302.50 H19 M14 314.50 H19 M14 321.50 H19 M14 327.50 H19 M14 334.50 H19 M14 346.50 H19 M14 353.50 H19 M14 359.50 H19 M14 366.50 H19 M14 378.50 H19 M14 385.50 H19 M14 391.50 H19 M14 398.50 H19 M14 410.50 H19 M14 417.50 H19 M14 423.50 H19 M14 430.50 H19 M14 442.50 H19 M14 449.50 H19 M14 455.50 H19 M14 462.50 H19 M14 474.50 H19 M14 481.50 H19 M14 487.50 H19 M14 494.50 H19 M14 506.50 H19 M14 513.50 H19 M14 519.50 H19 M14 526.50 H19 M14 538.50 H19 M14 545.50 H19 M14 551.50 H19 M16 273.50 H19 M16 279.50 H19 M16 286.50 H19 M16 292.50 H19 M16 298.50 H19 M16 305.50 H19 M16 311.50 H19 M16 318.50 H19 M16 324.50 H19 M16 330.50 H19 M16 337.50 H19 M16 343.50 H19 M16 350.50 H19 M16 356.50 H19 M16 362.50 H19 M16 369.50 H19 M16 375.50 H19 M16 382.50 H19 M16 388.50 H19 M16 394.50 H19 M16 401.50 H19 M16 407.50 H19 M16 414.50 H19 M16 420.50 H19 M16 426.50 H19 M16 433.50 H19 M16 439.50 H19 M16 446.50 H19 M16 452.50 H19 M16 458.50 H19 M16 465.50 H19 M16 471.50 H19 M16 478.50 H19 M16 484.50 H19 M16 490.50 H19 M16 497.50 H19 M16 503.50 H19 M16 510.50 H19 M16 516.50 H19 M16 522.50 H19 M16 529.50 H19 M16 535.50 H19 M16 542.50 H19 M16 548.50 H19 " stroke="#000" stroke-width="1.1"/><path d="M19 266 V554" stroke="#000" stroke-width="1.6"/></svg>
<div class="t" style="left:5.8px;top:279.5px;font-size:9.4px;writing-mode:vertical-rl;transform:rotate(180deg);transform-origin:50% 50%">0</div>
<div class="t" style="left:5.8px;top:311.5px;font-size:9.4px;writing-mode:vertical-rl;transform:rotate(180deg);transform-origin:50% 50%">50</div>
<div class="t" style="left:5.8px;top:343.5px;font-size:9.4px;writing-mode:vertical-rl;transform:rotate(180deg);transform-origin:50% 50%">100</div>
<div class="t" style="left:5.8px;top:375.5px;font-size:9.4px;writing-mode:vertical-rl;transform:rotate(180deg);transform-origin:50% 50%">150</div>
<div class="t" style="left:5.8px;top:407.5px;font-size:9.4px;writing-mode:vertical-rl;transform:rotate(180deg);transform-origin:50% 50%">200</div>
<div class="t" style="left:5.8px;top:439.5px;font-size:9.4px;writing-mode:vertical-rl;transform:rotate(180deg);transform-origin:50% 50%">250</div>
<div class="t" style="left:5.8px;top:471.5px;font-size:9.4px;writing-mode:vertical-rl;transform:rotate(180deg);transform-origin:50% 50%">300</div>
<div class="t" style="left:5.8px;top:503.5px;font-size:9.4px;writing-mode:vertical-rl;transform:rotate(180deg);transform-origin:50% 50%">350</div>
<div class="t" style="left:5.8px;top:535.5px;font-size:9.4px;writing-mode:vertical-rl;transform:rotate(180deg);transform-origin:50% 50%">400</div>
<div class="a" style="left:590px;top:268px;width:13px;height:273px;background:#c3cddc"></div>
<div class="a" style="left:20px;top:541px;width:570px;height:13px;background:#c3cddc"></div>
<div class="btn" style="left:590px;top:268px;width:13px;height:13px"></div>
<svg style="left:593.7px;top:273px" width="6" height="4"><path d="M0 3 H5.6 L2.8 0 Z" fill="#000"/></svg>
<div class="btn" style="left:590px;top:528px;width:13px;height:13px"></div>
<svg style="left:593.7px;top:533.2px" width="6" height="4"><path d="M0 0 H5.6 L2.8 3 Z" fill="#000"/></svg>
<div class="btn" style="left:590px;top:376px;width:13px;height:57px"></div>
<div class="btn" style="left:20px;top:541px;width:13px;height:13px"></div>
<svg style="left:24.5px;top:545px" width="5" height="7"><path d="M3.4 0 V5.8 L0 2.9Z" fill="#000"/></svg>
<div class="btn" style="left:577px;top:541px;width:13px;height:13px"></div>
<svg style="left:582px;top:545px" width="5" height="7"><path d="M0 0 V5.8 L3.4 2.9Z" fill="#000"/></svg>
<div class="btn" style="left:163px;top:541px;width:237px;height:13px"></div>
<div class="a" style="left:590px;top:541px;width:13px;height:13px;background:#869bb8;border-top:1px solid #000;border-left:1px solid #000"></div><svg style="left:0;top:0" width="604" height="554">
<defs><clipPath id="pc"><polygon points="275.6,365.9 394.0,336.6 423.2,454.6 304.7,483.9" fill="#000" /></clipPath><clipPath id="oc"><polygon points="270.8,363.5 397.0,332.3 432.0,473.5 305.8,504.7" fill="#000" /></clipPath>
<filter id="bl" x="-5%" y="-5%" width="110%" height="110%"><feGaussianBlur stdDeviation="0.7"/></filter></defs>
<polygon points="270.8,363.5 397.0,332.3 432.0,473.5 305.8,504.7" fill="#ece0e2" />
<g clip-path="url(#oc)">
<polygon points="305.8,504.7 300.5,483.4 329.1,499.0" fill="#b4b4e6" />
<polygon points="432.0,473.5 426.2,450.2 406.7,479.8" fill="#acace2" />
<polygon points="270.8,363.5 397.0,332.3 397.9,335.7 271.7,366.9" fill="#f0eaf4" />
<polygon points="270.8,363.5 274.7,362.5 304.9,484.4 301.0,485.3" fill="#f0eaf4" />
<polygon points="397.0,332.3 393.1,333.2 423.3,455.1 427.2,454.1" fill="#ccc6e2" />
</g>
<g clip-path="url(#pc)"><g filter="url(#bl)">
<polygon points="270.8,363.5 397.0,332.3 432.0,473.5 305.8,504.7" fill="#b08078" />
<polygon points="270.8,363.5 397.0,332.3 405.2,365.3 276.6,386.8" fill="#5c80d0" />
<polygon points="284.4,402.1 291.7,383.3 299.6,380.4 318.4,364.5 317.7,358.5 371.7,362.9 399.1,367.3 399.1,376.2 380.0,420.0 351.5,425.2 350.0,434.8 334.9,436.3 303.1,430.2 292.7,439.6" fill="#dcae2c" />
<polygon points="274.3,367.4 295.3,366.4 293.8,377.5 299.6,380.4 291.7,383.3 285.9,403.5 282.3,403.5" fill="#43353f" />
<polygon points="280.1,381.2 290.2,380.4 288.5,394.9 283.3,396.6" fill="#9a94a4" />
<polygon points="365.9,345.9 378.9,337.2 396.2,335.8 399.8,347.3 407.8,373.3 399.1,377.7 384.7,366.1 368.8,363.2" fill="#5673b8" />
<path d="M383.9 367.5 L382.9 351.7 L382.1 340.1" fill="none" stroke="#2e2630" stroke-width="2.6" stroke-linecap="round"/>
<path d="M383.2 358.9 L376.0 350.2 L370.2 347.3" fill="none" stroke="#2e2630" stroke-width="1.8" stroke-linecap="round"/>
<path d="M382.9 354.5 L389.0 345.9 L391.9 337.9" fill="none" stroke="#2e2630" stroke-width="1.8" stroke-linecap="round"/>
<path d="M383.5 361.8 L391.9 354.5 L398.4 351.7" fill="none" stroke="#2e2630" stroke-width="1.8" stroke-linecap="round"/>
<path d="M382.6 350.2 L377.4 343.0 L375.3 340.1" fill="none" stroke="#2e2630" stroke-width="1.5" stroke-linecap="round"/>
<path d="M386.1 350.2 L394.8 345.9 L397.7 343.0" fill="none" stroke="#2e2630" stroke-width="1.5" stroke-linecap="round"/>
<path d="M378.9 353.8 L373.1 354.5 L369.5 356.7" fill="none" stroke="#2e2630" stroke-width="1.5" stroke-linecap="round"/>
<path d="M390.4 356.0 L396.2 360.3 L400.5 363.2" fill="none" stroke="#2e2630" stroke-width="1.6" stroke-linecap="round"/>
<path d="M387.5 363.2 L394.8 363.9 L399.8 367.5" fill="none" stroke="#2e2630" stroke-width="1.8" stroke-linecap="round"/>
<path d="M376.0 350.2 L371.7 353.1" fill="none" stroke="#2e2630" stroke-width="1.2" stroke-linecap="round"/>
<path d="M384.7 344.4 L386.8 340.1" fill="none" stroke="#2e2630" stroke-width="1.2" stroke-linecap="round"/>
<path d="M393.3 347.3 L396.2 349.5" fill="none" stroke="#2e2630" stroke-width="1.2" stroke-linecap="round"/>
<path d="M373.8 361.0 L379.6 362.5" fill="none" stroke="#2e2630" stroke-width="2.2" stroke-linecap="round"/>
<path d="M388.3 342.3 L393.3 340.8" fill="none" stroke="#2e2630" stroke-width="1.2" stroke-linecap="round"/>
<path d="M371.7 349.5 L373.8 344.4" fill="none" stroke="#2e2630" stroke-width="1.2" stroke-linecap="round"/>
<polygon points="370.2,347.3 380.3,337.9 396.2,336.5 399.8,347.3 407.0,371.9 399.1,377.7 384.7,366.1 371.7,362.5" fill="#2e2630" opacity=".38"/>
<polygon points="350.0,350.2 365.9,345.9 368.8,363.2 350.0,362.5" fill="#4e78cc" />
<polygon points="397.7,363.2 410.6,366.1 425.1,410.0 404.9,410.0 399.1,377.7" fill="#9a6c66" />
<polygon points="397.7,362.5 407.0,354.5 413.5,377.7 419.3,397.9 407.8,393.5 399.1,377.7" fill="#4a3038" />
<polygon points="299.6,380.4 318.4,364.5 317.7,358.5 350.0,358.2 374.0,360.2 376.9,371.0 369.6,373.9 350.0,383.3 330.6,376.1 320.5,377.8 313.3,381.9 307.5,381.9" fill="#e4b42c" />
<polygon points="350.0,362.5 371.7,363.2 370.2,371.9 358.7,377.7 350.0,376.2" fill="#e8b830" />
<polygon points="384.7,366.1 399.1,367.5 399.1,376.2 386.1,374.8" fill="#e0b830" />
<polygon points="387.8,367.8 394.8,368.4 394.5,373.3 387.8,372.7" fill="#6a8a30" />
<polygon points="324.9,379.3 345.1,376.1 356.6,387.7 356.6,415.1 327.8,415.1 323.4,397.8" fill="#5a4434" />
<polygon points="291.7,383.3 307.5,381.9 317.7,376.1 320.8,378.3 313.3,387.7 303.2,397.8 285.6,402.4" fill="#53636a" />
<polygon points="284.2,402.4 303.2,397.8 303.9,420.0 287.0,420.0" fill="#f0c24c" />
<polygon points="286.5,408.6 303.8,408.6 303.1,430.2 295.9,434.5 292.7,439.6" fill="#e8b830" />
<polygon points="294.5,366.7 315.5,357.3 318.4,364.5 299.6,380.4 293.8,377.5" fill="#2a2228" />
<polygon points="295.2,433.8 303.1,429.5 310.3,431.7 327.7,438.9 349.3,436.0 355.1,446.1 334.9,453.3 323.3,458.4 314.7,462.7 306.0,465.6 298.8,457.7" fill="#2c1c22" />
<polygon points="326.2,421.6 340.6,416.5 351.5,425.2 350.0,434.8 334.9,436.3 328.4,430.2" fill="#e8b424" />
<polygon points="335.6,431.9 349.6,431.1 349.6,434.5 336.0,435.4" fill="#3a3020" />
<polygon points="327.7,467.8 369.5,458.4 369.5,462.7 330.5,472.4" fill="#5e3c3c" />
<polygon points="337.8,469.9 347.9,467.8 348.6,473.5 338.5,475.3" fill="#e0a0b8" />
<polygon points="347.9,467.8 358.0,466.0 358.7,472.1 348.6,473.5" fill="#7090d8" />
<polygon points="327.8,397.0 348.0,394.9 356.6,407.9 350.9,420.0 330.6,420.0 324.9,407.9" fill="#86604f" />
<polygon points="333.5,408.6 343.6,406.4 348.0,415.1 337.9,418.0" fill="#e8d4d4" />
<polygon points="350.9,403.5 358.1,402.1 359.5,409.3 353.0,410.8" fill="#a8d0d8" />
<polygon points="323.3,410.0 340.6,410.0 343.5,417.2 327.7,422.3" fill="#9a6a54" />
<polygon points="320.5,390.5 335.0,387.7 350.9,392.0 355.2,397.8 332.1,397.8 324.9,401.4" fill="#2a2430" />
<circle cx="327.8" cy="383.3" r="4.6" fill="#2a1c1c"/>
<circle cx="328.5" cy="385.9" r="3" fill="#b07858"/>
<polygon points="301.0,399.5 307.5,395.2 319.1,397.0 323.7,407.9 322.3,420.9 303.5,420.9" fill="#26262f" />
<polygon points="303.1,408.6 319.3,408.6 320.7,423.0 313.5,436.3 308.9,437.7 304.3,428.8" fill="#24242e" />
<circle cx="312.2" cy="388.4" r="5.8" fill="#2c1c18"/>
<circle cx="315.1" cy="389.8" r="3.4" fill="#c08868"/>
<polygon points="308.9,437.4 320.4,422.7 327.9,438.9 316.4,446.4 311.0,446.4" fill="#f2eaea" />
<polygon points="313.5,446.1 321.9,444.7 323.3,460.5 316.1,462.3" fill="#c09080" />
<polygon points="315.8,456.2 323.3,455.1 323.9,464.9 316.4,465.6" fill="#f0ecec" />
<polygon points="316.1,466.3 324.8,464.9 325.9,473.5 317.8,475.3" fill="#3a3038" />
<polygon points="317.8,469.9 324.0,468.5 324.8,472.8 318.7,474.7" fill="#d8d0d0" />
<polygon points="358.7,380.8 374.5,379.1 379.6,390.6 381.0,410.9 363.0,410.9 361.6,395.0 350.0,388.1 350.0,384.9" fill="#22222c" />
<polygon points="357.2,398.6 383.5,398.6 379.2,424.8 368.1,415.6 357.9,414.7" fill="#22222c" />
<polygon points="365.6,382.0 370.5,381.4 369.9,391.4 367.0,390.6" fill="#e4dce4" />
<circle cx="366.7" cy="368.6" r="5.4" fill="#2a1c1c"/>
<circle cx="367.3" cy="374.8" r="3.4" fill="#c89878"/>
<polygon points="354.3,373.3 364.4,371.2 365.2,378.4 358.7,380.8 352.9,386.3 350.7,382.0" fill="#3a2c32" />
<polygon points="355.5,419.1 367.3,414.4 379.2,424.8 377.7,433.5 367.3,432.1 363.0,427.7" fill="#f2eaea" />
<polygon points="347.1,424.5 363.0,427.4 359.0,440.7 354.0,436.4" fill="#c08878" />
<polygon points="355.2,441.6 366.2,442.2 364.4,453.7 354.3,452.7" fill="#221c22" />
<polygon points="371.7,433.2 377.7,433.2 376.3,455.2 372.4,455.2" fill="#c08878" />
<polygon points="369.9,454.9 376.6,454.6 376.0,463.5 369.6,463.2" fill="#2a2228" />
<polygon points="345.8,447.8 352.2,446.8 352.9,454.5 346.7,455.5" fill="#e8e0e0" />
<polygon points="371.7,382.3 378.9,379.1 388.3,374.0 399.1,377.7 405.6,392.1 403.7,402.2 399.8,410.9 371.7,410.9" fill="#24242e" />
<polygon points="382.9,398.6 406.6,398.6 403.7,409.0 396.5,413.3 390.4,409.0" fill="#24242e" />
<polygon points="377.4,377.7 387.8,374.5 388.4,390.6 383.2,396.7 378.9,384.9" fill="#e8e0e8" />
<polygon points="379.6,380.5 382.1,380.3 381.5,387.8 379.5,387.2" fill="#3a3858" />
<ellipse cx="378" cy="364.6" rx="8" ry="7.6" fill="#2a1c1c"/>
<circle cx="379" cy="373.4" r="4.3" fill="#c89070"/>
<circle cx="376.9" cy="393.5" r="2.6" fill="#c0a050"/>
<polygon points="391.2,377.7 395.1,377.7 395.1,405.8 391.9,405.8" fill="#6a6030" />
<polygon points="378.9,411.6 383.2,404.0 390.7,408.7 393.6,442.2 383.2,442.2 379.6,428.9" fill="#f2e6e6" />
<polygon points="392.6,405.8 399.1,406.5 398.4,412.3 393.0,411.6" fill="#c89880" />
<polygon points="393.3,413.0 403.7,414.4 406.6,433.5 403.7,442.2 394.8,442.2 392.6,426.0" fill="#5c5a30" />
<polygon points="387.5,441.9 393.6,441.9 396.5,458.1 391.3,460.9" fill="#d8b0a0" />
<polygon points="393.3,456.0 400.8,454.9 401.4,461.4 393.9,462.4" fill="#ece4e4" />
</g></g>
<polygon points="270.8,363.5 397.0,332.3 432.0,473.5 305.8,504.7" fill="none" stroke="#3aa2ea" stroke-width="1.7"/>
<path d="M348.6 419.1 H356.4 M352.5 415.3 V422.9" stroke="#fff" stroke-width="3"/><path d="M348.9 419.1 H356.1 M352.5 415.6 V422.6" stroke="#000" stroke-width="1.1"/>
<circle cx="364.4" cy="411.3" r="3.1" fill="none" stroke="#000" stroke-width="2.4"/><circle cx="364.4" cy="411.3" r="3.1" fill="none" stroke="#fff" stroke-width="1.1"/>
<circle cx="479.3" cy="400.6" r="4.1" fill="none" stroke="#000" stroke-width="1.1" stroke-dasharray="14 1.6 1 1.6 1 1.6 1 1.6 1 1.6"  transform="rotate(-60 479.3 400.6)"/><path d="M474 399.5 H482.8 M478.5 395 V404.2" stroke="#000" stroke-width="1.1"/>
</svg></body></html>
